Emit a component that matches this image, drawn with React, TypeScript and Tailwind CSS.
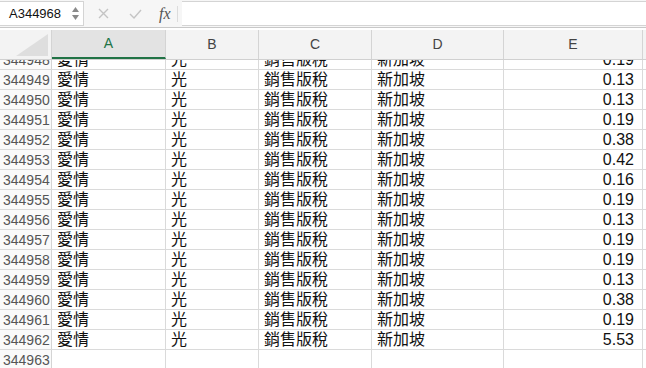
import React from 'react';

const COLS = [
  { key: 'A', w: 'w-[114px]' },
  { key: 'B', w: 'w-[93px]' },
  { key: 'C', w: 'w-[113px]' },
  { key: 'D', w: 'w-[132px]' },
  { key: 'E', w: 'w-[139px]' },
];

const VALUES = ['0.19', '0.13', '0.13', '0.19', '0.38', '0.42', '0.16', '0.19', '0.13', '0.19', '0.19', '0.13', '0.38', '0.19', '5.53'];

const ROWS = VALUES.map((v, i) => ({ n: 344948 + i, v }));

const cjk = 'font-["Liberation_Sans","Noto_Sans_CJK_TC",sans-serif]';

const App: React.FC = () => {
  return (
    <div className="w-[646px] h-[368px] overflow-hidden bg-white font-['Liberation_Sans',sans-serif]">
      {/* Formula bar */}
      <div className="h-[28px] bg-[#f6f6f6] border-b border-[#c8c8c8] flex items-stretch">
        <div className="w-[84px] mt-px mb-[1px] bg-white border border-[#d4d4d4] border-l-0 flex items-center justify-between pl-[9px] pr-[4px]">
          <span className="text-[13px] text-[#111]">A344968</span>
          <div className="flex flex-col items-center gap-[3px]">
            <svg width="7" height="5" viewBox="0 0 7 5"><path d="M3.5 0L7 5H0z" fill="#8a8a8a" /></svg>
            <svg width="7" height="5" viewBox="0 0 7 5"><path d="M0 0h7L3.5 5z" fill="#8a8a8a" /></svg>
          </div>
        </div>
        <div className="w-[98px] flex items-center">
          <svg className="ml-[14px]" width="11" height="11" viewBox="0 0 11 11"><path d="M1 1l9 9M10 1l-9 9" stroke="#c4c4c4" strokeWidth="1.4" /></svg>
          <svg className="ml-[20px]" width="13" height="10" viewBox="0 0 13 10"><path d="M1 5l4 4 7-8" stroke="#c4c4c4" strokeWidth="1.4" fill="none" /></svg>
          <span className="ml-[17px] text-[16px] italic text-[#555] font-['Liberation_Serif',serif]">fx</span>
          <div className="ml-[6px] w-px h-[16px] bg-[#dcdcdc]" />
        </div>
        <div className="flex-1 mt-px mb-[1px] bg-white border-y border-[#d4d4d4]" />
      </div>

      {/* Column header */}
      <div className="mt-[2px] h-[30px] flex bg-[#f3f3f3] border-b border-[#d0d0d0]">
        <div className="w-[52px] shrink-0 border-r border-[#d4d4d4] relative">
          <svg className="absolute right-[3px] bottom-[3px]" width="32" height="22" viewBox="0 0 32 22"><path d="M32 0V22H0z" fill="#dedede" /></svg>
        </div>
        {COLS.map(c => (
          <div
            key={c.key}
            className={`${c.w} shrink-0 border-r border-[#d4d4d4] flex items-center justify-center text-[14px] ${c.key === 'A' ? 'bg-[#e3e3e3] text-[#217346] border-b-2 border-b-[#217346]' : 'text-[#444]'}`}
          >
            {c.key}
          </div>
        ))}
        <div className="flex-1" />
      </div>

      {/* Body */}
      <div className="h-[308px] overflow-hidden">
        <div className="-mt-[10px]">
          {ROWS.concat([{ n: 344963, v: '' }]).map((r, i) => {
            const empty = r.v === '' && i > 0;
            return (
              <div key={r.n} className="h-[20px] flex border-b border-[#dadada]">
                <div className="w-[52px] shrink-0 border-r border-[#d4d4d4] pl-[3px] text-[14px] leading-[20px] text-[#555] bg-[#fafafa]">{r.n}</div>
                <div className={`w-[114px] shrink-0 border-r border-[#dadada] pl-[5px] text-[16px] leading-[20px] text-[#111] ${cjk}`}>{empty ? '' : '愛情'}</div>
                <div className={`w-[93px] shrink-0 border-r border-[#dadada] pl-[5px] text-[16px] leading-[20px] text-[#111] ${cjk}`}>{empty ? '' : '光'}</div>
                <div className={`w-[113px] shrink-0 border-r border-[#dadada] pl-[5px] text-[16px] leading-[20px] text-[#111] ${cjk}`}>{empty ? '' : '銷售版稅'}</div>
                <div className={`w-[132px] shrink-0 border-r border-[#dadada] pl-[5px] text-[16px] leading-[20px] text-[#111] ${cjk}`}>{empty ? '' : '新加坡'}</div>
                <div className="w-[139px] shrink-0 border-r border-[#dadada] pr-[8px] text-right text-[16px] leading-[20px] text-[#111]">{r.v}</div>
                <div className="flex-1" />
              </div>
            );
          })}
        </div>
      </div>
    </div>
  );
};

export default App;
